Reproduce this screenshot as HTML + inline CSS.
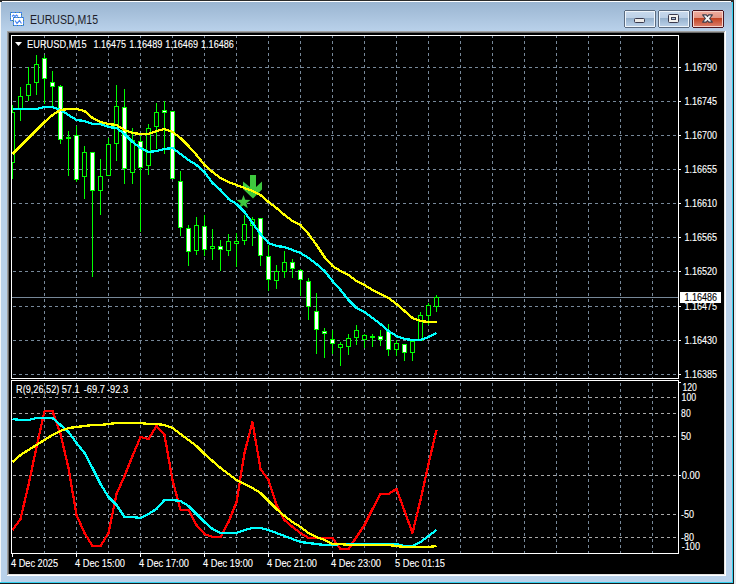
<!DOCTYPE html>
<html><head><meta charset="utf-8"><title>EURUSD,M15</title>
<style>
html,body{margin:0;padding:0;width:736px;height:584px;overflow:hidden;background:#b9d1ea;}
svg{display:block;}
text{font-family:"Liberation Sans", sans-serif;}
</style></head><body>
<svg width="736" height="584" viewBox="0 0 736 584">
<defs>
<linearGradient id="tb" x1="0" y1="0" x2="0" y2="1">
<stop offset="0" stop-color="#98b3cf"/><stop offset="1" stop-color="#b9d1ea"/>
</linearGradient>
<linearGradient id="btnTop" x1="0" y1="0" x2="0" y2="1">
<stop offset="0" stop-color="#c6d8ec"/><stop offset="1" stop-color="#bcd0e6"/>
</linearGradient>
<linearGradient id="btnBot" x1="0" y1="0" x2="0" y2="1">
<stop offset="0" stop-color="#94b0cc"/><stop offset="1" stop-color="#b8cfe7"/>
</linearGradient>
<linearGradient id="clsTop" x1="0" y1="0" x2="0" y2="1">
<stop offset="0" stop-color="#eeaa9c"/><stop offset="1" stop-color="#e39584"/>
</linearGradient>
<linearGradient id="clsBot" x1="0" y1="0" x2="0" y2="1">
<stop offset="0" stop-color="#c0401f"/><stop offset="1" stop-color="#d97a66"/>
</linearGradient>
</defs>

<rect x="0" y="0" width="736" height="584" fill="#b9d1ea"/>
<rect x="0" y="0" width="736" height="31" fill="url(#tb)"/>
<g shape-rendering="crispEdges">
<rect x="0" y="0" width="736" height="1" fill="#2a2a2a"/>
<rect x="2" y="1" width="730" height="1" fill="#ffffff"/>
<rect x="0" y="1" width="1" height="581" fill="#f4f6f8"/>
<rect x="732" y="2" width="1" height="581" fill="#34d0f0"/>
<rect x="733" y="0" width="1" height="584" fill="#1a1a1a"/>
<rect x="734" y="0" width="2" height="584" fill="#e8ecf0"/>
<rect x="0" y="582" width="733" height="1" fill="#34d0f0"/>
<rect x="0" y="583" width="734" height="1" fill="#1a1a1a"/>
</g>
<rect x="0" y="0" width="2" height="2" fill="#2a2a2a"/>
<rect x="731" y="0" width="3" height="2" fill="#2a2a2a"/>
<g shape-rendering="crispEdges">
<rect x="10.5" y="12.5" width="11" height="8" fill="#ffffff" stroke="#4a88f2" stroke-width="1"/>
<rect x="10.5" y="12.5" width="11" height="8" fill="none" stroke="#3f8a78" stroke-width="1" stroke-dasharray="1 3"/>
<rect x="13.5" y="17.5" width="10" height="8" fill="#ffffff" stroke="#4a88f2" stroke-width="1"/>
<rect x="13.5" y="17.5" width="10" height="8" fill="none" stroke="#3f8a78" stroke-width="1" stroke-dasharray="1 3"/>
</g>
<polyline points="12,16.5 13.5,15 15,16.5 16.5,15 18,16.5" fill="none" stroke="#4a88f2" stroke-width="1.2"/>
<polyline points="15,20.5 17,23.5 19.5,20.5 21.5,23.5" fill="none" stroke="#4a88f2" stroke-width="1.2"/>

<text x="30" y="24" font-size="13" fill="#1e1e2a" textLength="68" lengthAdjust="spacingAndGlyphs">EURUSD,M15</text>
<g shape-rendering="crispEdges">
<rect x="624.5" y="10.5" width="31" height="17" rx="2" ry="2" fill="#5a6b80" stroke="#5a6b80" stroke-width="1"/>
<rect x="625" y="11" width="30" height="16" rx="1.5" fill="#eef4fa"/>
<rect x="626" y="12" width="28" height="6" fill="url(#btnTop)"/>
<rect x="626" y="18" width="28" height="8" fill="url(#btnBot)"/>
<rect x="658.5" y="10.5" width="31" height="17" rx="2" ry="2" fill="#5a6b80" stroke="#5a6b80" stroke-width="1"/>
<rect x="659" y="11" width="30" height="16" rx="1.5" fill="#eef4fa"/>
<rect x="660" y="12" width="28" height="6" fill="url(#btnTop)"/>
<rect x="660" y="18" width="28" height="8" fill="url(#btnBot)"/>
<rect x="692.5" y="10.5" width="31" height="17" rx="2" ry="2" fill="#4b1620" stroke="#4b1620" stroke-width="1"/>
<rect x="693" y="11" width="30" height="16" rx="1.5" fill="#f6d2ca"/>
<rect x="694" y="12" width="28" height="6" fill="url(#clsTop)"/>
<rect x="694" y="18" width="28" height="8" fill="url(#clsBot)"/>
</g>
<rect x="634.5" y="18.5" width="10" height="4" rx="1" fill="#ecebe8" stroke="#3a3a4e" stroke-width="1"/>
<rect x="668.5" y="14.5" width="10" height="8" rx="1" fill="#f2f1ee" stroke="#3a3a4e" stroke-width="1"/>
<rect x="671.5" y="17.5" width="4" height="2" fill="#a8c0d8" stroke="#3a3a4e" stroke-width="1"/>
<polygon points="702.6,14.9 706.3,14.9 707.5,16.5 708.7,14.9 712.4,14.9 709.6,18.5 712.4,22.1 708.7,22.1 707.5,20.5 706.3,22.1 702.6,22.1 705.4,18.5" fill="#f4f4f4" stroke="#40404e" stroke-width="1.1" stroke-linejoin="round"/>
<g shape-rendering="crispEdges">
<rect x="7" y="31" width="719" height="545" fill="#000000"/>
<rect x="7" y="31" width="718" height="1" fill="#a0a0a0"/>
<rect x="7" y="31" width="1" height="544" fill="#a0a0a0"/>
<rect x="8" y="32" width="716" height="1" fill="#696969"/>
<rect x="8" y="32" width="1" height="542" fill="#696969"/>
<rect x="725" y="31" width="1" height="545" fill="#ffffff"/>
<rect x="7" y="575" width="719" height="1" fill="#ffffff"/>
<rect x="724" y="32" width="1" height="543" fill="#e3e3e3"/>
<rect x="8" y="574" width="717" height="1" fill="#e3e3e3"/>
</g>
<g shape-rendering="crispEdges" fill="none" stroke-width="1">
<line x1="13" y1="67.5" x2="678" y2="67.5" stroke="#778899" stroke-dasharray="3 3"/>
<line x1="13" y1="101.5" x2="678" y2="101.5" stroke="#778899" stroke-dasharray="3 3"/>
<line x1="13" y1="135.5" x2="678" y2="135.5" stroke="#778899" stroke-dasharray="3 3"/>
<line x1="13" y1="169.5" x2="678" y2="169.5" stroke="#778899" stroke-dasharray="3 3"/>
<line x1="13" y1="203.5" x2="678" y2="203.5" stroke="#778899" stroke-dasharray="3 3"/>
<line x1="13" y1="237.5" x2="678" y2="237.5" stroke="#778899" stroke-dasharray="3 3"/>
<line x1="13" y1="271.5" x2="678" y2="271.5" stroke="#778899" stroke-dasharray="3 3"/>
<line x1="13" y1="306.5" x2="678" y2="306.5" stroke="#778899" stroke-dasharray="3 3"/>
<line x1="13" y1="340.5" x2="678" y2="340.5" stroke="#778899" stroke-dasharray="3 3"/>
<line x1="13" y1="374.5" x2="678" y2="374.5" stroke="#778899" stroke-dasharray="3 3"/>
<line x1="44.5" y1="35" x2="44.5" y2="378" stroke="#778899" stroke-dasharray="3 3"/>
<line x1="44.5" y1="383" x2="44.5" y2="553" stroke="#778899" stroke-dasharray="3 3"/>
<line x1="76.5" y1="35" x2="76.5" y2="378" stroke="#778899" stroke-dasharray="3 3"/>
<line x1="76.5" y1="383" x2="76.5" y2="553" stroke="#778899" stroke-dasharray="3 3"/>
<line x1="108.5" y1="35" x2="108.5" y2="378" stroke="#778899" stroke-dasharray="3 3"/>
<line x1="108.5" y1="383" x2="108.5" y2="553" stroke="#778899" stroke-dasharray="3 3"/>
<line x1="140.5" y1="35" x2="140.5" y2="378" stroke="#778899" stroke-dasharray="3 3"/>
<line x1="140.5" y1="383" x2="140.5" y2="553" stroke="#778899" stroke-dasharray="3 3"/>
<line x1="172.5" y1="35" x2="172.5" y2="378" stroke="#778899" stroke-dasharray="3 3"/>
<line x1="172.5" y1="383" x2="172.5" y2="553" stroke="#778899" stroke-dasharray="3 3"/>
<line x1="204.5" y1="35" x2="204.5" y2="378" stroke="#778899" stroke-dasharray="3 3"/>
<line x1="204.5" y1="383" x2="204.5" y2="553" stroke="#778899" stroke-dasharray="3 3"/>
<line x1="236.5" y1="35" x2="236.5" y2="378" stroke="#778899" stroke-dasharray="3 3"/>
<line x1="236.5" y1="383" x2="236.5" y2="553" stroke="#778899" stroke-dasharray="3 3"/>
<line x1="268.5" y1="35" x2="268.5" y2="378" stroke="#778899" stroke-dasharray="3 3"/>
<line x1="268.5" y1="383" x2="268.5" y2="553" stroke="#778899" stroke-dasharray="3 3"/>
<line x1="300.5" y1="35" x2="300.5" y2="378" stroke="#778899" stroke-dasharray="3 3"/>
<line x1="300.5" y1="383" x2="300.5" y2="553" stroke="#778899" stroke-dasharray="3 3"/>
<line x1="332.5" y1="35" x2="332.5" y2="378" stroke="#778899" stroke-dasharray="3 3"/>
<line x1="332.5" y1="383" x2="332.5" y2="553" stroke="#778899" stroke-dasharray="3 3"/>
<line x1="364.5" y1="35" x2="364.5" y2="378" stroke="#778899" stroke-dasharray="3 3"/>
<line x1="364.5" y1="383" x2="364.5" y2="553" stroke="#778899" stroke-dasharray="3 3"/>
<line x1="396.5" y1="35" x2="396.5" y2="378" stroke="#778899" stroke-dasharray="3 3"/>
<line x1="396.5" y1="383" x2="396.5" y2="553" stroke="#778899" stroke-dasharray="3 3"/>
<line x1="428.5" y1="35" x2="428.5" y2="378" stroke="#778899" stroke-dasharray="3 3"/>
<line x1="428.5" y1="383" x2="428.5" y2="553" stroke="#778899" stroke-dasharray="3 3"/>
<line x1="460.5" y1="35" x2="460.5" y2="378" stroke="#778899" stroke-dasharray="3 3"/>
<line x1="460.5" y1="383" x2="460.5" y2="553" stroke="#778899" stroke-dasharray="3 3"/>
<line x1="492.5" y1="35" x2="492.5" y2="378" stroke="#778899" stroke-dasharray="3 3"/>
<line x1="492.5" y1="383" x2="492.5" y2="553" stroke="#778899" stroke-dasharray="3 3"/>
<line x1="524.5" y1="35" x2="524.5" y2="378" stroke="#778899" stroke-dasharray="3 3"/>
<line x1="524.5" y1="383" x2="524.5" y2="553" stroke="#778899" stroke-dasharray="3 3"/>
<line x1="556.5" y1="35" x2="556.5" y2="378" stroke="#778899" stroke-dasharray="3 3"/>
<line x1="556.5" y1="383" x2="556.5" y2="553" stroke="#778899" stroke-dasharray="3 3"/>
<line x1="588.5" y1="35" x2="588.5" y2="378" stroke="#778899" stroke-dasharray="3 3"/>
<line x1="588.5" y1="383" x2="588.5" y2="553" stroke="#778899" stroke-dasharray="3 3"/>
<line x1="620.5" y1="35" x2="620.5" y2="378" stroke="#778899" stroke-dasharray="3 3"/>
<line x1="620.5" y1="383" x2="620.5" y2="553" stroke="#778899" stroke-dasharray="3 3"/>
<line x1="652.5" y1="35" x2="652.5" y2="378" stroke="#778899" stroke-dasharray="3 3"/>
<line x1="652.5" y1="383" x2="652.5" y2="553" stroke="#778899" stroke-dasharray="3 3"/>
<line x1="13" y1="397.5" x2="678" y2="397.5" stroke="#a9a9a9" stroke-dasharray="3 3"/>
<line x1="13" y1="413.5" x2="678" y2="413.5" stroke="#a9a9a9" stroke-dasharray="3 3"/>
<line x1="13" y1="436.5" x2="678" y2="436.5" stroke="#a9a9a9" stroke-dasharray="3 3"/>
<line x1="13" y1="475.5" x2="678" y2="475.5" stroke="#a9a9a9" stroke-dasharray="3 3"/>
<line x1="13" y1="514.5" x2="678" y2="514.5" stroke="#a9a9a9" stroke-dasharray="3 3"/>
<line x1="13" y1="537.5" x2="678" y2="537.5" stroke="#a9a9a9" stroke-dasharray="3 3"/>
</g>
<rect x="12" y="297" width="667" height="1" fill="#778899" shape-rendering="crispEdges"/>
<polygon points="250,175 256,175 256,187 262,181.5 262,189.5 253,198.5 243,189 243,181.5 250,187" fill="#3ec83e"/>
<polygon points="243.50,195.00 245.26,199.87 250.44,200.04 246.35,203.23 247.79,208.21 243.50,205.30 239.21,208.21 240.65,203.23 236.56,200.04 241.74,199.87" fill="#3ec83e"/>
<defs><clipPath id="cm0"><rect x="12" y="36" width="666" height="342"/></clipPath></defs>
<g shape-rendering="crispEdges" clip-path="url(#cm0)">
<rect x="12" y="105" width="1" height="74" fill="#00ff00"/>
<rect x="10" y="112" width="5" height="51" fill="#00ff00"/>
<rect x="11" y="113" width="3" height="49" fill="#000000"/>
<rect x="20" y="87" width="1" height="34" fill="#00ff00"/>
<rect x="18" y="96" width="5" height="13" fill="#00ff00"/>
<rect x="19" y="97" width="3" height="11" fill="#000000"/>
<rect x="28" y="67" width="1" height="34" fill="#00ff00"/>
<rect x="26" y="84" width="5" height="12" fill="#00ff00"/>
<rect x="27" y="85" width="3" height="10" fill="#000000"/>
<rect x="36" y="55" width="1" height="40" fill="#00ff00"/>
<rect x="34" y="64" width="5" height="19" fill="#00ff00"/>
<rect x="35" y="65" width="3" height="17" fill="#000000"/>
<rect x="44" y="55" width="1" height="49" fill="#00ff00"/>
<rect x="42" y="58" width="5" height="21" fill="#00ff00"/>
<rect x="43" y="59" width="3" height="19" fill="#ffffff"/>
<rect x="52" y="71" width="1" height="36" fill="#00ff00"/>
<rect x="50" y="82" width="5" height="5" fill="#00ff00"/>
<rect x="51" y="83" width="3" height="3" fill="#ffffff"/>
<rect x="60" y="85" width="1" height="59" fill="#00ff00"/>
<rect x="58" y="86" width="5" height="54" fill="#00ff00"/>
<rect x="59" y="87" width="3" height="52" fill="#ffffff"/>
<rect x="68" y="131" width="1" height="45" fill="#00ff00"/>
<rect x="66" y="137" width="5" height="2" fill="#00ff00"/>
<rect x="76" y="126" width="1" height="56" fill="#00ff00"/>
<rect x="74" y="135" width="5" height="45" fill="#00ff00"/>
<rect x="75" y="136" width="3" height="43" fill="#ffffff"/>
<rect x="84" y="146" width="1" height="53" fill="#00ff00"/>
<rect x="82" y="152" width="5" height="25" fill="#00ff00"/>
<rect x="83" y="153" width="3" height="23" fill="#000000"/>
<rect x="92" y="152" width="1" height="125" fill="#00ff00"/>
<rect x="90" y="152" width="5" height="39" fill="#00ff00"/>
<rect x="91" y="153" width="3" height="37" fill="#ffffff"/>
<rect x="100" y="159" width="1" height="56" fill="#00ff00"/>
<rect x="98" y="176" width="5" height="15" fill="#00ff00"/>
<rect x="99" y="177" width="3" height="13" fill="#000000"/>
<rect x="108" y="138" width="1" height="38" fill="#00ff00"/>
<rect x="106" y="144" width="5" height="32" fill="#00ff00"/>
<rect x="107" y="145" width="3" height="30" fill="#000000"/>
<rect x="116" y="85" width="1" height="76" fill="#00ff00"/>
<rect x="114" y="106" width="5" height="38" fill="#00ff00"/>
<rect x="115" y="107" width="3" height="36" fill="#000000"/>
<rect x="124" y="89" width="1" height="95" fill="#00ff00"/>
<rect x="122" y="107" width="5" height="62" fill="#00ff00"/>
<rect x="123" y="108" width="3" height="60" fill="#ffffff"/>
<rect x="132" y="128" width="1" height="56" fill="#00ff00"/>
<rect x="130" y="140" width="5" height="33" fill="#00ff00"/>
<rect x="131" y="141" width="3" height="31" fill="#000000"/>
<rect x="140" y="136" width="1" height="96" fill="#00ff00"/>
<rect x="138" y="141" width="5" height="27" fill="#00ff00"/>
<rect x="139" y="142" width="3" height="25" fill="#ffffff"/>
<rect x="148" y="124" width="1" height="51" fill="#00ff00"/>
<rect x="146" y="128" width="5" height="38" fill="#00ff00"/>
<rect x="147" y="129" width="3" height="36" fill="#000000"/>
<rect x="156" y="103" width="1" height="46" fill="#00ff00"/>
<rect x="154" y="112" width="5" height="15" fill="#00ff00"/>
<rect x="155" y="113" width="3" height="13" fill="#000000"/>
<rect x="164" y="101" width="1" height="53" fill="#00ff00"/>
<rect x="162" y="110" width="5" height="3" fill="#00ff00"/>
<rect x="163" y="111" width="3" height="1" fill="#ffffff"/>
<rect x="172" y="111" width="1" height="68" fill="#00ff00"/>
<rect x="170" y="111" width="5" height="68" fill="#00ff00"/>
<rect x="171" y="112" width="3" height="66" fill="#ffffff"/>
<rect x="180" y="171" width="1" height="65" fill="#00ff00"/>
<rect x="178" y="181" width="5" height="47" fill="#00ff00"/>
<rect x="179" y="182" width="3" height="45" fill="#ffffff"/>
<rect x="188" y="225" width="1" height="41" fill="#00ff00"/>
<rect x="186" y="228" width="5" height="24" fill="#00ff00"/>
<rect x="187" y="229" width="3" height="22" fill="#ffffff"/>
<rect x="196" y="217" width="1" height="38" fill="#00ff00"/>
<rect x="194" y="225" width="5" height="26" fill="#00ff00"/>
<rect x="195" y="226" width="3" height="24" fill="#000000"/>
<rect x="204" y="215" width="1" height="41" fill="#00ff00"/>
<rect x="202" y="226" width="5" height="24" fill="#00ff00"/>
<rect x="203" y="227" width="3" height="22" fill="#ffffff"/>
<rect x="212" y="229" width="1" height="31" fill="#00ff00"/>
<rect x="210" y="246" width="5" height="3" fill="#00ff00"/>
<rect x="211" y="247" width="3" height="1" fill="#000000"/>
<rect x="220" y="240" width="1" height="31" fill="#00ff00"/>
<rect x="218" y="246" width="5" height="4" fill="#00ff00"/>
<rect x="219" y="247" width="3" height="2" fill="#ffffff"/>
<rect x="228" y="234" width="1" height="22" fill="#00ff00"/>
<rect x="226" y="241" width="5" height="10" fill="#00ff00"/>
<rect x="227" y="242" width="3" height="8" fill="#000000"/>
<rect x="236" y="233" width="1" height="34" fill="#00ff00"/>
<rect x="234" y="241" width="5" height="3" fill="#00ff00"/>
<rect x="235" y="242" width="3" height="1" fill="#000000"/>
<rect x="244" y="215" width="1" height="30" fill="#00ff00"/>
<rect x="242" y="224" width="5" height="17" fill="#00ff00"/>
<rect x="243" y="225" width="3" height="15" fill="#000000"/>
<rect x="252" y="217" width="1" height="29" fill="#00ff00"/>
<rect x="250" y="219" width="5" height="7" fill="#00ff00"/>
<rect x="251" y="220" width="3" height="5" fill="#000000"/>
<rect x="260" y="218" width="1" height="48" fill="#00ff00"/>
<rect x="258" y="218" width="5" height="38" fill="#00ff00"/>
<rect x="259" y="219" width="3" height="36" fill="#ffffff"/>
<rect x="268" y="245" width="1" height="46" fill="#00ff00"/>
<rect x="266" y="256" width="5" height="24" fill="#00ff00"/>
<rect x="267" y="257" width="3" height="22" fill="#ffffff"/>
<rect x="276" y="265" width="1" height="24" fill="#00ff00"/>
<rect x="274" y="271" width="5" height="10" fill="#00ff00"/>
<rect x="275" y="272" width="3" height="8" fill="#000000"/>
<rect x="284" y="251" width="1" height="27" fill="#00ff00"/>
<rect x="282" y="262" width="5" height="10" fill="#00ff00"/>
<rect x="283" y="263" width="3" height="8" fill="#000000"/>
<rect x="292" y="259" width="1" height="19" fill="#00ff00"/>
<rect x="290" y="262" width="5" height="7" fill="#00ff00"/>
<rect x="291" y="263" width="3" height="5" fill="#ffffff"/>
<rect x="300" y="269" width="1" height="27" fill="#00ff00"/>
<rect x="298" y="270" width="5" height="10" fill="#00ff00"/>
<rect x="299" y="271" width="3" height="8" fill="#ffffff"/>
<rect x="308" y="278" width="1" height="42" fill="#00ff00"/>
<rect x="306" y="281" width="5" height="26" fill="#00ff00"/>
<rect x="307" y="282" width="3" height="24" fill="#ffffff"/>
<rect x="316" y="293" width="1" height="61" fill="#00ff00"/>
<rect x="314" y="311" width="5" height="19" fill="#00ff00"/>
<rect x="315" y="312" width="3" height="17" fill="#ffffff"/>
<rect x="324" y="328" width="1" height="30" fill="#00ff00"/>
<rect x="322" y="331" width="5" height="3" fill="#00ff00"/>
<rect x="323" y="332" width="3" height="1" fill="#ffffff"/>
<rect x="332" y="330" width="1" height="24" fill="#00ff00"/>
<rect x="330" y="339" width="5" height="5" fill="#00ff00"/>
<rect x="331" y="340" width="3" height="3" fill="#ffffff"/>
<rect x="340" y="342" width="1" height="24" fill="#00ff00"/>
<rect x="338" y="344" width="5" height="4" fill="#00ff00"/>
<rect x="339" y="345" width="3" height="2" fill="#000000"/>
<rect x="348" y="334" width="1" height="21" fill="#00ff00"/>
<rect x="346" y="338" width="5" height="9" fill="#00ff00"/>
<rect x="347" y="339" width="3" height="7" fill="#000000"/>
<rect x="356" y="325" width="1" height="20" fill="#00ff00"/>
<rect x="354" y="330" width="5" height="8" fill="#00ff00"/>
<rect x="355" y="331" width="3" height="6" fill="#000000"/>
<rect x="364" y="334" width="1" height="14" fill="#00ff00"/>
<rect x="362" y="335" width="5" height="5" fill="#00ff00"/>
<rect x="363" y="336" width="3" height="3" fill="#000000"/>
<rect x="372" y="334" width="1" height="13" fill="#00ff00"/>
<rect x="370" y="336" width="5" height="2" fill="#00ff00"/>
<rect x="380" y="330" width="1" height="16" fill="#00ff00"/>
<rect x="378" y="336" width="5" height="4" fill="#00ff00"/>
<rect x="379" y="337" width="3" height="2" fill="#ffffff"/>
<rect x="388" y="324" width="1" height="32" fill="#00ff00"/>
<rect x="386" y="331" width="5" height="19" fill="#00ff00"/>
<rect x="387" y="332" width="3" height="17" fill="#ffffff"/>
<rect x="396" y="340" width="1" height="16" fill="#00ff00"/>
<rect x="394" y="343" width="5" height="7" fill="#00ff00"/>
<rect x="395" y="344" width="3" height="5" fill="#000000"/>
<rect x="404" y="344" width="1" height="17" fill="#00ff00"/>
<rect x="402" y="344" width="5" height="9" fill="#00ff00"/>
<rect x="403" y="345" width="3" height="7" fill="#ffffff"/>
<rect x="412" y="341" width="1" height="20" fill="#00ff00"/>
<rect x="410" y="341" width="5" height="12" fill="#00ff00"/>
<rect x="411" y="342" width="3" height="10" fill="#000000"/>
<rect x="420" y="312" width="1" height="29" fill="#00ff00"/>
<rect x="418" y="315" width="5" height="26" fill="#00ff00"/>
<rect x="419" y="316" width="3" height="24" fill="#000000"/>
<rect x="428" y="303" width="1" height="22" fill="#00ff00"/>
<rect x="426" y="305" width="5" height="11" fill="#00ff00"/>
<rect x="427" y="306" width="3" height="9" fill="#000000"/>
<rect x="436" y="295" width="1" height="17" fill="#00ff00"/>
<rect x="434" y="297" width="5" height="10" fill="#00ff00"/>
<rect x="435" y="298" width="3" height="8" fill="#000000"/>
</g>
<defs><clipPath id="cm"><rect x="12" y="36" width="666" height="342"/></clipPath><clipPath id="ci"><rect x="12" y="381" width="666" height="172"/></clipPath></defs>
<polyline points="12.5,109 20.5,109 28.5,109 36.5,109 44.5,107 52.5,107 60.5,110 68.5,115 76.5,120 84.5,121 92.5,124 100.5,124 108.5,127 116.5,128 124.5,134 132.5,142 140.5,148 148.5,152 156.5,151 164.5,149 172.5,148 180.5,154 188.5,160 196.5,165 204.5,172 212.5,183 220.5,190 228.5,199 236.5,204 244.5,212 252.5,223 260.5,234 268.5,243 276.5,246 284.5,247 292.5,250 300.5,253 308.5,258 316.5,264 324.5,271 332.5,281 340.5,290 348.5,300 356.5,308 364.5,312 372.5,318 380.5,324 388.5,331 396.5,336 404.5,339 412.5,340 420.5,340 428.5,337 436.5,333" fill="none" stroke="#00ffff" stroke-width="2.3" stroke-linejoin="round" shape-rendering="crispEdges" clip-path="url(#cm)"/>
<polyline points="12.5,154 20.5,146 28.5,138 36.5,130 44.5,122 52.5,115 60.5,110 68.5,109 76.5,109 84.5,111 92.5,118 100.5,122 108.5,124 116.5,125 124.5,130 132.5,133 140.5,134 148.5,134 156.5,131 164.5,129 172.5,132 180.5,138 188.5,146 196.5,155 204.5,165 212.5,172 220.5,178 228.5,182 236.5,185 244.5,188 252.5,191 260.5,195 268.5,202 276.5,208 284.5,215 292.5,221 300.5,225 308.5,234 316.5,245 324.5,257 332.5,266 340.5,271 348.5,275 356.5,281 364.5,285 372.5,290 380.5,294 388.5,298 396.5,304 404.5,311 412.5,318 420.5,321 428.5,322 436.5,322" fill="none" stroke="#ffff00" stroke-width="2.3" stroke-linejoin="round" shape-rendering="crispEdges" clip-path="url(#cm)"/>
<polyline points="12.5,530 20.5,519 28.5,485 36.5,447 44.5,411 52.5,411 60.5,434 68.5,468 76.5,515 84.5,533 92.5,546 100.5,546 108.5,533 116.5,494 124.5,476 132.5,456 140.5,437 148.5,439 156.5,426 164.5,435 172.5,480 180.5,510 188.5,510 196.5,525 204.5,534 212.5,537 220.5,537 228.5,522 236.5,502 244.5,453 252.5,422 260.5,469 268.5,480 276.5,505 284.5,520 292.5,527 300.5,533 308.5,538 316.5,538 324.5,538 332.5,538 340.5,549 348.5,549 356.5,537 364.5,525 372.5,509 380.5,494 388.5,494 396.5,489 404.5,511 412.5,533 420.5,500 428.5,464 436.5,430" fill="none" stroke="#ff0000" stroke-width="2.3" stroke-linejoin="round" shape-rendering="crispEdges" clip-path="url(#ci)"/>
<polyline points="12.5,419 20.5,420 28.5,420 36.5,418 44.5,418 52.5,418 60.5,425 68.5,432 76.5,443 84.5,453 92.5,468 100.5,484 108.5,497 116.5,505 124.5,517 132.5,517 140.5,518 148.5,514 156.5,509 164.5,500 172.5,500 180.5,501 188.5,506 196.5,514 204.5,522 212.5,529 220.5,533 228.5,533 236.5,533 244.5,530 252.5,528 260.5,528 268.5,530 276.5,533 284.5,536 292.5,539 300.5,542 308.5,543 316.5,544 324.5,545 332.5,545 340.5,544 348.5,544 356.5,544 364.5,544 372.5,544 380.5,544 388.5,544 396.5,544 404.5,546 412.5,546 420.5,542 428.5,536 436.5,530" fill="none" stroke="#00ffff" stroke-width="2.3" stroke-linejoin="round" shape-rendering="crispEdges" clip-path="url(#ci)"/>
<polyline points="12.5,462 20.5,455 28.5,450 36.5,445 44.5,440 52.5,435 60.5,431 68.5,428 76.5,427 84.5,426 92.5,425 100.5,425 108.5,424 116.5,423 124.5,423 132.5,423 140.5,423 148.5,424 156.5,424 164.5,425 172.5,428 180.5,434 188.5,440 196.5,446 204.5,454 212.5,461 220.5,468 228.5,474 236.5,480 244.5,484 252.5,488 260.5,493 268.5,501 276.5,509 284.5,516 292.5,522 300.5,527 308.5,533 316.5,537 324.5,540 332.5,544 340.5,544 348.5,545 356.5,545 364.5,545 372.5,545 380.5,545 388.5,545 396.5,546 404.5,547 412.5,547 420.5,547 428.5,547 436.5,546" fill="none" stroke="#ffff00" stroke-width="2.3" stroke-linejoin="round" shape-rendering="crispEdges" clip-path="url(#ci)"/>
<g shape-rendering="crispEdges" fill="#ffffff">
<rect x="11" y="35" width="668" height="1"/>
<rect x="11" y="35" width="1" height="344"/>
<rect x="678" y="35" width="1" height="344"/>
<rect x="11" y="378" width="668" height="1"/>
<rect x="11" y="380" width="668" height="1"/>
<rect x="11" y="380" width="1" height="174"/>
<rect x="678" y="380" width="1" height="174"/>
<rect x="11" y="553" width="668" height="1"/>
</g>
<g shape-rendering="crispEdges" fill="#ffffff">
<rect x="679" y="67" width="2" height="1"/>
<rect x="679" y="101" width="2" height="1"/>
<rect x="679" y="135" width="2" height="1"/>
<rect x="679" y="169" width="2" height="1"/>
<rect x="679" y="203" width="2" height="1"/>
<rect x="679" y="237" width="2" height="1"/>
<rect x="679" y="271" width="2" height="1"/>
<rect x="679" y="306" width="2" height="1"/>
<rect x="679" y="340" width="2" height="1"/>
<rect x="679" y="374" width="2" height="1"/>
<rect x="679" y="382" width="2" height="1"/>
<rect x="679" y="475" width="2" height="1"/>
</g>
<text x="684.4" y="71" font-size="10" fill="#ffffff" stroke="#ffffff" stroke-width="0.12" textLength="32.6" lengthAdjust="spacingAndGlyphs">1.16790</text>
<text x="684.4" y="105" font-size="10" fill="#ffffff" stroke="#ffffff" stroke-width="0.12" textLength="32.6" lengthAdjust="spacingAndGlyphs">1.16745</text>
<text x="684.4" y="139" font-size="10" fill="#ffffff" stroke="#ffffff" stroke-width="0.12" textLength="32.6" lengthAdjust="spacingAndGlyphs">1.16700</text>
<text x="684.4" y="173" font-size="10" fill="#ffffff" stroke="#ffffff" stroke-width="0.12" textLength="32.6" lengthAdjust="spacingAndGlyphs">1.16655</text>
<text x="684.4" y="207" font-size="10" fill="#ffffff" stroke="#ffffff" stroke-width="0.12" textLength="32.6" lengthAdjust="spacingAndGlyphs">1.16610</text>
<text x="684.4" y="241" font-size="10" fill="#ffffff" stroke="#ffffff" stroke-width="0.12" textLength="32.6" lengthAdjust="spacingAndGlyphs">1.16565</text>
<text x="684.4" y="275" font-size="10" fill="#ffffff" stroke="#ffffff" stroke-width="0.12" textLength="32.6" lengthAdjust="spacingAndGlyphs">1.16520</text>
<text x="684.4" y="310" font-size="10" fill="#ffffff" stroke="#ffffff" stroke-width="0.12" textLength="32.6" lengthAdjust="spacingAndGlyphs">1.16475</text>
<text x="684.4" y="344" font-size="10" fill="#ffffff" stroke="#ffffff" stroke-width="0.12" textLength="32.6" lengthAdjust="spacingAndGlyphs">1.16430</text>
<text x="684.4" y="378" font-size="10" fill="#ffffff" stroke="#ffffff" stroke-width="0.12" textLength="32.6" lengthAdjust="spacingAndGlyphs">1.16385</text>
<rect x="680" y="292" width="41" height="11" fill="#ffffff" shape-rendering="crispEdges"/>
<text x="684.4" y="301" font-size="10" fill="#000000" stroke="#000000" stroke-width="0.12" textLength="32.6" lengthAdjust="spacingAndGlyphs">1.16486</text>
<text x="682.5" y="391" font-size="10" fill="#ffffff" stroke="#ffffff" stroke-width="0.12" textLength="14.4" lengthAdjust="spacingAndGlyphs">120</text>
<text x="681.6" y="401" font-size="10" fill="#ffffff" stroke="#ffffff" stroke-width="0.12" textLength="14.6" lengthAdjust="spacingAndGlyphs">100</text>
<text x="681.1" y="417" font-size="10" fill="#ffffff" stroke="#ffffff" stroke-width="0.12" textLength="9.6" lengthAdjust="spacingAndGlyphs">80</text>
<text x="681.0" y="440" font-size="10" fill="#ffffff" stroke="#ffffff" stroke-width="0.12" textLength="10.0" lengthAdjust="spacingAndGlyphs">50</text>
<text x="681.8" y="479" font-size="10" fill="#ffffff" stroke="#ffffff" stroke-width="0.12" textLength="18.2" lengthAdjust="spacingAndGlyphs">0.00</text>
<text x="681.0" y="518" font-size="10" fill="#ffffff" stroke="#ffffff" stroke-width="0.12" textLength="13.0" lengthAdjust="spacingAndGlyphs">-50</text>
<text x="681.0" y="541" font-size="10" fill="#ffffff" stroke="#ffffff" stroke-width="0.12" textLength="13.0" lengthAdjust="spacingAndGlyphs">-80</text>
<text x="681.7" y="550" font-size="10" fill="#ffffff" stroke="#ffffff" stroke-width="0.12" textLength="18.3" lengthAdjust="spacingAndGlyphs">-100</text>
<g shape-rendering="crispEdges" fill="#ffffff">
<rect x="12" y="554" width="1" height="3"/>
<rect x="76" y="554" width="1" height="3"/>
<rect x="140" y="554" width="1" height="3"/>
<rect x="204" y="554" width="1" height="3"/>
<rect x="268" y="554" width="1" height="3"/>
<rect x="332" y="554" width="1" height="3"/>
<rect x="396" y="554" width="1" height="3"/>
</g>
<text x="11.0" y="567" font-size="10" fill="#ffffff" stroke="#ffffff" stroke-width="0.12" textLength="47.0" lengthAdjust="spacingAndGlyphs">4 Dec 2025</text>
<text x="75.0" y="567" font-size="10" fill="#ffffff" stroke="#ffffff" stroke-width="0.12" textLength="50.0" lengthAdjust="spacingAndGlyphs">4 Dec 15:00</text>
<text x="139.0" y="567" font-size="10" fill="#ffffff" stroke="#ffffff" stroke-width="0.12" textLength="50.0" lengthAdjust="spacingAndGlyphs">4 Dec 17:00</text>
<text x="203.0" y="567" font-size="10" fill="#ffffff" stroke="#ffffff" stroke-width="0.12" textLength="50.0" lengthAdjust="spacingAndGlyphs">4 Dec 19:00</text>
<text x="267.0" y="567" font-size="10" fill="#ffffff" stroke="#ffffff" stroke-width="0.12" textLength="50.0" lengthAdjust="spacingAndGlyphs">4 Dec 21:00</text>
<text x="331.0" y="567" font-size="10" fill="#ffffff" stroke="#ffffff" stroke-width="0.12" textLength="50.0" lengthAdjust="spacingAndGlyphs">4 Dec 23:00</text>
<text x="395.0" y="567" font-size="10" fill="#ffffff" stroke="#ffffff" stroke-width="0.12" textLength="50.0" lengthAdjust="spacingAndGlyphs">5 Dec 01:15</text>
<polygon points="15,42 22,42 18.5,46" fill="#ffffff"/>
<text x="27.1" y="48" font-size="10" fill="#ffffff" stroke="#ffffff" stroke-width="0.12" textLength="59.5" lengthAdjust="spacingAndGlyphs">EURUSD,M15</text>
<text x="93.5" y="48" font-size="10" fill="#ffffff" stroke="#ffffff" stroke-width="0.12" textLength="32.5" lengthAdjust="spacingAndGlyphs">1.16475</text>
<text x="129.2" y="48" font-size="10" fill="#ffffff" stroke="#ffffff" stroke-width="0.12" textLength="33.2" lengthAdjust="spacingAndGlyphs">1.16489</text>
<text x="165.2" y="48" font-size="10" fill="#ffffff" stroke="#ffffff" stroke-width="0.12" textLength="32.8" lengthAdjust="spacingAndGlyphs">1.16469</text>
<text x="201.1" y="48" font-size="10" fill="#ffffff" stroke="#ffffff" stroke-width="0.12" textLength="32.6" lengthAdjust="spacingAndGlyphs">1.16486</text>
<text x="16.1" y="393" font-size="10" fill="#ffffff" stroke="#ffffff" stroke-width="0.12" textLength="43.2" lengthAdjust="spacingAndGlyphs">R(9,26,52)</text>
<text x="61.7" y="393" font-size="10" fill="#ffffff" stroke="#ffffff" stroke-width="0.12" textLength="18.0" lengthAdjust="spacingAndGlyphs">57.1</text>
<text x="83.7" y="393" font-size="10" fill="#ffffff" stroke="#ffffff" stroke-width="0.12" textLength="21.2" lengthAdjust="spacingAndGlyphs">-69.7</text>
<text x="107.0" y="393" font-size="10" fill="#ffffff" stroke="#ffffff" stroke-width="0.12" textLength="21.1" lengthAdjust="spacingAndGlyphs">-92.3</text>
</svg></body></html>
